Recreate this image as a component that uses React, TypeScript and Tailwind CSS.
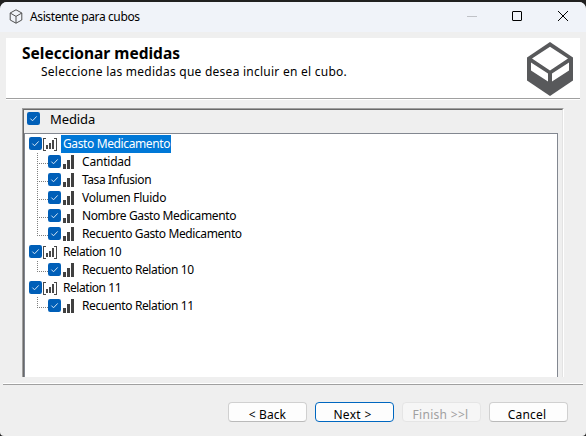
import React from "react";

function Check() {
  return (
    <svg className="block h-[13px] w-[13px] shrink-0" viewBox="0 0 13 13">
      <rect width="13" height="13" rx="2.2" fill="#005fb8" />
      <path d="M3.4 6.6 5.5 8.8 9.7 4.4" fill="none" stroke="#d5e6f5" strokeWidth="1" />
    </svg>
  );
}

function Bars() {
  return (
    <svg className="block h-[14px] w-[12px] shrink-0" viewBox="0 0 12 14" fill="#404040" shapeRendering="crispEdges">
      <rect x="0" y="9" width="3" height="5" />
      <rect x="4" y="5" width="3" height="9" />
      <rect x="8" y="0" width="3" height="14" />
    </svg>
  );
}

function GroupBars() {
  return (
    <svg className="block h-[13px] w-[15px] shrink-0" viewBox="0 0 15 13" fill="#484848" shapeRendering="crispEdges">
      <path d="M0 0h3v1H1v11h2v1H0zM14 0h-3v1h2v11h-2v1h3z" />
      <rect x="3" y="7" width="2" height="4" />
      <rect x="6" y="5" width="2" height="6" />
      <rect x="9" y="2" width="2" height="9" />
    </svg>
  );
}

function Group({ label, selected, spacing }: { label: string; selected?: boolean; spacing: string }) {
  return (
    <div className="flex h-[18px] items-start pl-[4px]">
      <div className="mt-[2px]"><Check /></div>
      <div className="ml-px mt-[3px]"><GroupBars /></div>
      <span className={`ml-[3px] h-[18px] pl-[2px] pr-px leading-[18px] ${spacing} ${selected ? "bg-[#0078d7] text-white" : ""}`}>{label}</span>
    </div>
  );
}

function Item({ label, last, spacing }: { label: string; last?: boolean; spacing: string }) {
  return (
    <div className="flex h-[18px] items-start pl-[12px]">
      <svg className="block h-[18px] w-[11px]" viewBox="0 0 11 18" fill="none" stroke="#808080" strokeDasharray="1 1" shapeRendering="crispEdges">
        <path d={last ? "M.5 0V11" : "M.5 0V18"} />
        <path d="M0 10.5H11" />
      </svg>
      <div className="mt-[2px]"><Check /></div>
      <div className="ml-[2px] mt-[2px]"><Bars /></div>
      <span className={`ml-[7px] leading-[18px] ${spacing}`}>{label}</span>
    </div>
  );
}

function Button({ label, kind, text }: { label: string; kind?: string; text: string }) {
  const look =
    kind === "default"
      ? "border-[#0067c0] bg-[#fdfdfd]"
      : kind === "disabled"
        ? "border-[#e5e5e5] bg-[#f6f6f6] text-[#a0a0a0]"
        : "border-[#d0d0d0] border-b-[#bababa] bg-[#fdfdfd]";
  return (
    <button className={`flex h-[20px] w-[79px] items-center justify-center rounded-[4px] border pt-[5px] text-[12px] ${look} ${text}`}>
      {label}
    </button>
  );
}

export default function App() {
  return (
    <div className="h-[436px] w-[586px] overflow-hidden bg-[#202020] pt-[2px] font-['Noto_Sans','Open_Sans',sans-serif] text-[12px] text-black whitespace-nowrap">
      <div className="flex h-[434px] w-[586px] flex-col overflow-hidden rounded-t-[7px] rounded-b-[4px] bg-[#efefef]">
        <header className="flex h-[30px] shrink-0 items-center bg-[#f0f3f9] pl-[9px]">
          <svg className="mb-[2px] h-[15px] w-[14px]" viewBox="0 0 14 15" fill="none" stroke="#505050" strokeWidth="1">
            <path d="M7 .8 12.8 4v7L7 14.2 1.2 11V4zM1.2 4 7 7.4 12.8 4M7 7.4v6.8" />
          </svg>
          <span className="ml-[7px] text-[12px] tracking-[-0.38px]">Asistente para cubos</span>
          <div className="ml-auto flex items-center pb-[2px] pr-[18px]">
            <div className="h-px w-[10px] bg-[#c0c2c7]" />
            <div className="ml-[35px] h-[10px] w-[10px] rounded-[1px] border border-black" />
            <svg className="ml-[36px] h-[10px] w-[10px]" viewBox="0 0 10 10" stroke="#000" strokeWidth="1"><path d="M0 0 10 10M10 0 0 10" /></svg>
          </div>
        </header>
        <section className="mx-[6px] mt-[6px] flex h-[62px] shrink-0 justify-between border-b border-white bg-white shadow-[inset_0_-1px_0_#a0a0a0]">
          <div className="pl-[16px] pt-[6px]">
            <h1 className="text-[15.5px] font-bold leading-[19px]">Seleccionar medidas</h1>
            <p className="pl-[19px] text-[12px] leading-[18px] tracking-[0.25px]">Seleccione las medidas que desea incluir en el cubo.</p>
          </div>
          <svg className="mr-[7px] mt-[4px] h-[54px] w-[46px]" viewBox="0 0 46 54">
            <path fill="#58595b" d="M23 0 46 15.5V38.5L23 54 0 38.5V15.5z" />
            <path fill="#fff" d="M23 4.7 41 16.5 23 28.5 5 16.5zM4 20.5 21 31.5V39.5L4 28.5zM42 20.5 25 31.5V39.5L42 28.5z" />
          </svg>
        </section>
        <main className="ml-[22px] mt-[8px] h-[269px] w-[542px] shrink-0 border-l border-r border-t border-l-[#a0a0a0] border-r-white border-t-[#a0a0a0]">
          <div className="flex h-full flex-col border-l border-r border-t border-l-[#696969] border-r-[#e3e3e3] border-t-[#696969]">
            <div className="flex h-[23px] shrink-0 items-start pl-[3px]">
              <div className="mt-[2px]"><Check /></div>
              <span className="ml-[10px] text-[13px] leading-[19px] tracking-[-0.1px]">Medida</span>
            </div>
            <div className="mr-[4px] flex-1 border-l border-r border-t border-[#828790] bg-white pt-px">
              <Group label="Gasto Medicamento" selected spacing="tracking-[-0.38px]" />
              <Item label="Cantidad" spacing="tracking-[-0.2px]" />
              <Item label="Tasa Infusion" spacing="tracking-[-0.42px]" />
              <Item label="Volumen Fluido" spacing="tracking-[-0.25px]" />
              <Item label="Nombre Gasto Medicamento" spacing="tracking-[-0.38px]" />
              <Item label="Recuento Gasto Medicamento" spacing="tracking-[-0.39px]" last />
              <Group label="Relation 10" spacing="tracking-[-0.43px]" />
              <Item label="Recuento Relation 10" spacing="tracking-[-0.38px]" last />
              <Group label="Relation 11" spacing="tracking-[-0.45px]" />
              <Item label="Recuento Relation 11" spacing="tracking-[-0.38px]" last />
            </div>
          </div>
        </main>
        <footer className="ml-[3px] mr-[3px] mt-[6px] border-t border-white">
          <div className="flex justify-end gap-[8px] border-t border-[#a0a0a0] pr-[15px] pt-[17px]">
            <Button label="< Back" text="tracking-[0.1px]" />
            <Button label="Next >" kind="default" text="tracking-[0.3px] pr-[4px]" />
            <Button label="Finish >>l" kind="disabled" text="tracking-[0.3px] pr-[2px]" />
            <Button label="Cancel" text="tracking-[0.2px] pr-[3px]" />
          </div>
        </footer>
      </div>
    </div>
  );
}
